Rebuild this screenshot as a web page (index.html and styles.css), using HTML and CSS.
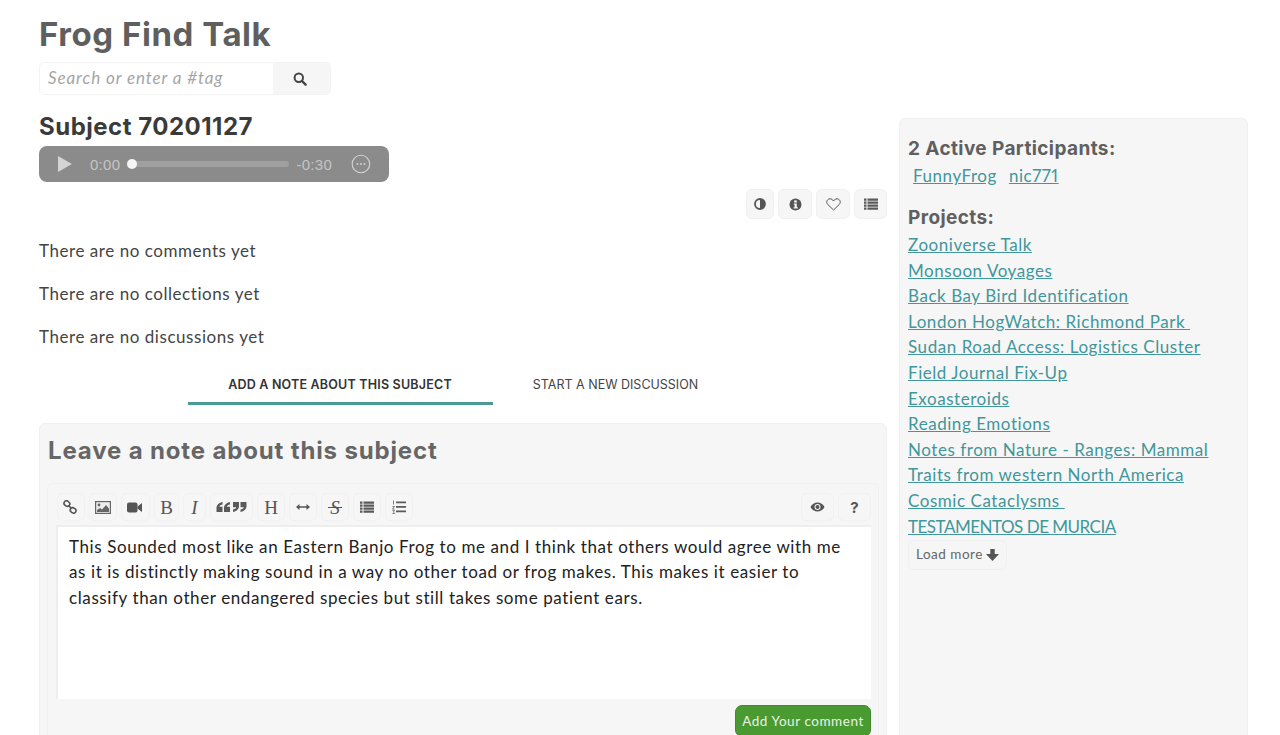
FILE: index.html
```html
<!DOCTYPE html>
<html lang="en">
<head>
<meta charset="utf-8">
<title>Frog Find Talk</title>
<link rel="stylesheet" href="styles.css">
</head>
<body>
<div class="page">
  <header class="site-head">
    <h1 class="site-title">Frog Find Talk</h1>
    <form class="search">
      <div class="search-input">Search or enter a #tag</div>
      <button class="search-btn" type="button" aria-label="Search">
        <svg width="14" height="14" viewBox="0 0 14 14"><circle cx="5.800" cy="5.800" r="4.200" fill="none" stroke="#444" stroke-width="2"/><path d="M9 9l3.600 3.600" stroke="#444" stroke-width="2.400" stroke-linecap="round"/></svg>
      </button>
    </form>
  </header>
  <div class="columns">
    <main class="main">
      <h2 class="subject-title">Subject 70201127</h2>
      <div class="player">
        <svg class="play" width="14" height="16" viewBox="0 0 14 16"><path d="M0 0l14 8-14 8z" fill="#d4d4d4"/></svg>
        <span class="time">0:00</span>
        <div class="track"><span class="thumb"></span></div>
        <span class="time">-0:30</span>
        <svg class="more" width="20" height="20" viewBox="0 0 20 20"><circle cx="10" cy="10" r="8.800" fill="none" stroke="#d0d0d0" stroke-width="1.200"/><circle cx="6.500" cy="10" r="1" fill="#d0d0d0"/><circle cx="10" cy="10" r="1" fill="#d0d0d0"/><circle cx="13.500" cy="10" r="1" fill="#d0d0d0"/></svg>
      </div>
      <div class="subject-tools">
        <button class="tool tool-a" type="button" aria-label="Invert"><svg width="12" height="12" viewBox="0 0 12 12"><circle cx="6" cy="6" r="5" fill="none" stroke="#555" stroke-width="1.800"/><path d="M6 1a5 5 0 0 1 0 10z" fill="#555"/></svg></button>
        <button class="tool tool-b" type="button" aria-label="Info"><svg width="13" height="13" viewBox="0 0 13 13"><circle cx="6.500" cy="6.500" r="6" fill="#555"/><rect x="5.200" y="2.400" width="2.600" height="2.200" fill="#f6f6f6"/><path d="M4.800 5.600h3v3.700h1v1.200H4.600V9.300h1V6.800h-.8z" fill="#f6f6f6"/></svg></button>
        <button class="tool tool-b" type="button" aria-label="Favorite"><svg width="15" height="13" viewBox="0 0 15 13"><path d="M7.500 12L1.800 6.500C-.6 3.900 1.500.8 4 .8c1.500 0 2.700.9 3.500 2.200C8.300 1.700 9.500.8 11 .8c2.500 0 4.600 3.100 2.200 5.700z" fill="none" stroke="#555" stroke-width="1"/></svg></button>
        <button class="tool tool-c" type="button" aria-label="List"><svg width="14" height="12" viewBox="0 0 14 12"><path d="M0 .5h2.500v2.200H0zM3.500 .5H14v2.200H3.500zM0 3.500h2.500v2.200H0zM3.500 3.500H14v2.200H3.500zM0 6.500h2.500v2.200H0zM3.500 6.500H14v2.200H3.500zM0 9.500h2.500v2.200H0zM3.500 9.500H14v2.200H3.500z" fill="#5a5a5a"/></svg></button>
      </div>
      <p class="empty">There are no comments yet</p>
      <p class="empty">There are no collections yet</p>
      <p class="empty">There are no discussions yet</p>
      <nav class="tabs">
        <a class="tab tab-active">ADD A NOTE ABOUT THIS SUBJECT</a>
        <a class="tab tab-other">START A NEW DISCUSSION</a>
      </nav>
      <section class="note">
        <h3 class="note-title">Leave a note about this subject</h3>
        <div class="editor">
          <div class="toolbar">
            <button class="ebtn ebtn-link" type="button" aria-label="Link"><svg width="14" height="14" viewBox="0 0 14 14"><g fill="none" stroke="#555" stroke-width="1.600"><ellipse cx="3.900" cy="3.600" rx="3" ry="2.500" transform="rotate(35 3.900 3.600)"/><ellipse cx="10.100" cy="10.400" rx="3" ry="2.500" transform="rotate(35 10.100 10.400)"/><path d="M5.800 5.700l2.400 2.600"/></g></svg></button>
            <button class="ebtn" type="button" aria-label="Image"><svg width="16" height="13" viewBox="0 0 16 13"><rect x=".6" y=".6" width="14.800" height="11.800" fill="#eee" stroke="#666" stroke-width="1.200"/><circle cx="4" cy="4" r="1.400" fill="#666"/><path d="M2 11V9l3-2 2 1.500L11 4l3 3.500V11z" fill="#666"/></svg></button>
            <button class="ebtn ebtn-video" type="button" aria-label="Video"><svg width="15" height="11" viewBox="0 0 15 11"><rect y=".5" width="10.500" height="10" rx="2" fill="#555"/><path d="M10.500 4.500L15 1v9l-4.500-3.500z" fill="#555"/></svg></button>
            <button class="ebtn ebtn-serif bold" type="button">B</button>
            <button class="ebtn ebtn-serif italic" type="button">I</button>
            <button class="ebtn" type="button" aria-label="Quote"><svg width="31" height="12" viewBox="0 0 31 12"><g fill="#5a5a5a"><path d="M6.500 1C3.500 1.500.5 3.500.5 7v4h6V5.800H3.300C3.500 4.500 5 3.700 6.500 3.500zM14 1c-3 .5-6 2.500-6 6v4h6V5.800h-3.200C11 4.500 12.500 3.700 14 3.500z"/><path d="M17 11c3-.5 6-2.500 6-6V1h-6v5.200h3.200C20 7.500 18.500 8.300 17 8.500zM24.500 11c3-.5 6-2.500 6-6V1h-6v5.200h3.200c-.2 1.300-1.700 2.100-3.200 2.300z"/></g></svg></button>
            <button class="ebtn ebtn-serif" type="button">H</button>
            <button class="ebtn" type="button" aria-label="Rule"><svg width="14" height="6" viewBox="0 0 14 6"><path d="M3 3h8" stroke="#555" stroke-width="1.500"/><path d="M3.500 0v6L0 3zM10.500 0v6L14 3z" fill="#555"/></svg></button>
            <button class="ebtn ebtn-serif strike" type="button">S</button>
            <button class="ebtn" type="button" aria-label="Bullets"><svg width="14" height="12" viewBox="0 0 14 12"><path d="M0 .5h2.500v2.200H0zM3.500 .5H14v2.200H3.500zM0 3.500h2.500v2.200H0zM3.500 3.500H14v2.200H3.500zM0 6.500h2.500v2.200H0zM3.500 6.500H14v2.200H3.500zM0 9.500h2.500v2.200H0zM3.500 9.500H14v2.200H3.500z" fill="#5a5a5a"/></svg></button>
            <button class="ebtn" type="button" aria-label="Numbers"><svg width="14" height="14" viewBox="0 0 14 14"><path d="M4 1.500h10v1.800H4zM4 6h10v1.800H4zM4 10.500h10v1.800H4z" fill="#5a5a5a"/><path d="M1.500 .5v4M.5 6.500h2l-2 2.500h2M.5 10.500h2l-1 1.500 1 1.500h-2" fill="none" stroke="#5a5a5a" stroke-width=".8"/></svg></button>
            <div class="toolbar-end">
              <button class="ebtn ebtn-eye" type="button" aria-label="Preview"><svg width="15" height="10" viewBox="0 0 15 10"><path d="M.5 5C2 2 4.500.5 7.500.5S13 2 14.500 5C13 8 10.500 9.500 7.500 9.500S2 8 .5 5z" fill="#555"/><circle cx="7.500" cy="5" r="3" fill="#f6f6f6"/><circle cx="7.500" cy="5" r="2" fill="#555"/></svg></button>
              <button class="ebtn ebtn-help" type="button">?</button>
            </div>
          </div>
          <div class="textarea">This Sounded most like an Eastern Banjo Frog to me and I think that others would agree with me as it is distinctly making sound in a way no other toad or frog makes. This makes it easier to classify than other endangered species but still takes some patient ears.</div>
          <div class="submit-row"><button class="submit" type="button">Add Your comment</button></div>
        </div>
      </section>
    </main>
    <aside class="side">
      <h4 class="side-title">2 Active Participants:</h4>
      <div class="people"><a href="#">FunnyFrog</a><a href="#">nic771</a></div>
      <h4 class="side-title projects-title">Projects:</h4>
      <ul class="projects">
        <li><a href="#">Zooniverse Talk</a></li>
        <li><a href="#">Monsoon Voyages</a></li>
        <li><a href="#">Back Bay Bird Identification</a></li>
        <li><a href="#">London HogWatch: Richmond Park&nbsp;</a></li>
        <li><a href="#">Sudan Road Access: Logistics Cluster</a></li>
        <li><a href="#">Field Journal Fix-Up</a></li>
        <li><a href="#">Exoasteroids</a></li>
        <li><a href="#">Reading Emotions</a></li>
        <li><a href="#">Notes from Nature - Ranges: Mammal Traits from western North America</a></li>
        <li><a href="#">Cosmic Cataclysms&nbsp;</a></li>
        <li><a class="caps" href="#">TESTAMENTOS DE MURCIA</a></li>
      </ul>
      <button class="load-more" type="button">Load more <svg width="13" height="12" viewBox="0 0 13 12"><path d="M4.300 0h4.400v5H13l-6.500 7L0 5h4.300z" fill="#555"/></svg></button>
    </aside>
  </div>
</div>
</body>
</html>
```
FILE: styles.css
```css
* { box-sizing: border-box; }
html, body { margin: 0; height: 735px; overflow: hidden; background: #fff; }
body { font-family: "Open Sans", "Noto Sans", sans-serif; color: #333; font-size: 16px; }
button { font-family: inherit; padding: 0; cursor: pointer; }
.page { padding: 0 32px 0 39px; height: 735px; overflow: hidden; }
.site-head { padding-top: 14px; }
.site-title { margin: 0; font: 700 33px/40px "Inter", sans-serif; color: #5f5f5f; letter-spacing: .55px; }
.search { display: flex; width: 292px; height: 33px; margin-top: 8px; border: 1px solid #f3f3f3; border-radius: 5px; overflow: hidden; }
.search-input { flex: 1; padding: 0 8px; font: italic 400 17px/30px "Lato", sans-serif; color: #a5a5a5; letter-spacing: .9px; }
.search-btn { width: 57px; border: 0; padding-right: 3px; background: #f6f6f6; display: flex; align-items: center; justify-content: center; }
.columns { display: flex; gap: 12px; align-items: flex-start; }
.main { width: 848px; flex: none; }
.subject-title { margin: 16px 0 0; font: 700 24px/32px "Inter", sans-serif; color: #3a3a3a; letter-spacing: .5px; }
.player { display: flex; align-items: center; width: 350px; height: 36px; margin-top: 3px; padding: 0 18px 0 19px; background: #8b8b8b; border-radius: 8px; color: #c4c4c4; font: 400 15px/1 "Liberation Sans", sans-serif; }
.play { margin-right: 18px; }
.time { letter-spacing: .3px; }
.track { position: relative; width: 163px; height: 6px; margin: 0 7px; background: #a0a0a0; border-radius: 3px; }
.thumb { position: absolute; left: 0; top: -2px; width: 10px; height: 10px; border-radius: 50%; background: #f5f5f5; }
.more { margin-left: 19px; }
.subject-tools { display: flex; justify-content: flex-end; gap: 4px; margin-top: 7px; }
.tool { height: 30px; background: #f6f6f6; border: 1px solid #f1f1f1; border-radius: 6px; display: flex; align-items: center; justify-content: center; }
.tool-a { width: 28px; }
.tool-b { width: 34px; }
.tool-c { width: 33px; }
.empty { margin: 0 0 17px; font: 400 17px/26px "Lato", sans-serif; color: #444; letter-spacing: .55px; }
.empty:first-of-type { margin-top: 19px; }
.tabs { display: flex; justify-content: center; margin-top: -2px; }
.tab { height: 40px; text-align: center; font: 400 12.500px/39px "Inter", sans-serif; color: #444; border-bottom: 3px solid transparent; }
.tab-active { width: 305px; color: #333; font-weight: 600; letter-spacing: .2px; border-bottom-color: #4a9a92; }
.tab-other { width: 246px; }
.note { margin-top: 18px; padding: 0 7px; background: #f6f6f6; border: 1px solid #f0f0f0; border-radius: 6px; height: 330px; }
.note-title { margin: 11px 0 0; padding-left: 1px; font: 700 24px/32px "Inter", sans-serif; color: #666; letter-spacing: .85px; }
.editor { margin-top: 16px; padding: 9px 7px 0 8px; border: 1px solid #f0f0f0; border-radius: 6px; height: 300px; }
.toolbar { display: flex; gap: 4px; height: 32px; padding-left: 1px; }
.toolbar-end { display: flex; gap: 4px; margin-left: auto; }
.ebtn { min-width: 28px; height: 28px; padding: 0 5px; background: #f6f6f6; border: 1px solid #f1f1f1; border-radius: 6px; display: flex; align-items: center; justify-content: center; color: #555; }
.ebtn-link svg { margin-right: 2px; }
.ebtn-video svg { margin-right: 2px; }
.ebtn-serif { font: 400 19px/1 "Liberation Serif", serif; padding: 0 5px; }
.ebtn-serif.bold { width: 25px; min-width: 25px; }
.ebtn-serif.italic { font-style: italic; width: 23px; min-width: 23px; }
.ebtn-serif.strike { position: relative; font-style: italic; }
.ebtn-serif.strike::after { content: ""; position: absolute; left: 6px; right: 6px; top: 13px; height: 1px; background: #555; }
.ebtn-eye { width: 33px; }
.ebtn-help { font: 700 15px/1 "Inter", sans-serif; width: 33px; }
.textarea { height: 174px; padding: 6.500px 11px; background: #fff; border-top: 2px solid #eee; border-left: 2px solid #eee; font: 400 17px/25.600px "Lato", sans-serif; color: #222; letter-spacing: .6px; }
.submit-row { display: flex; justify-content: flex-end; margin-top: 6px; }
.submit { width: 136px; height: 32px; background: #4a9a32; border: 1px solid #3f8a2a; border-radius: 7px; color: #e8f3e4; font: 400 13.500px/30px "Lato", sans-serif; letter-spacing: .55px; }
.side { width: 349px; flex: none; height: 640px; margin-top: 23px; padding: 16px 8px 0; background: #f6f6f6; border: 1px solid #f0f0f0; border-radius: 6px; }
.side-title { margin: 0; font: 700 19px/28px "Inter", sans-serif; color: #5f5f5f; letter-spacing: .4px; }
.people { display: flex; gap: 12px; padding-left: 5px; margin-top: -1px; font: 400 17px/28px "Lato", sans-serif; letter-spacing: .55px; font-variant-numeric: proportional-nums; }
a { color: #41979b; }
.projects-title { margin-top: 14px; }
.projects { margin: 0; padding: 0; list-style: none; font: 400 17px/25.600px "Lato", sans-serif; letter-spacing: .55px; width: 310px; }
.caps { letter-spacing: -.5px; }
.load-more { display: flex; align-items: center; gap: 3px; height: 30px; padding: 0 7px; margin-top: 1px; background: #f6f6f6; border: 1px solid #f0f0f0; border-radius: 6px; font: 400 13.500px/1 "Lato", sans-serif; color: #666; letter-spacing: .5px; }
```
